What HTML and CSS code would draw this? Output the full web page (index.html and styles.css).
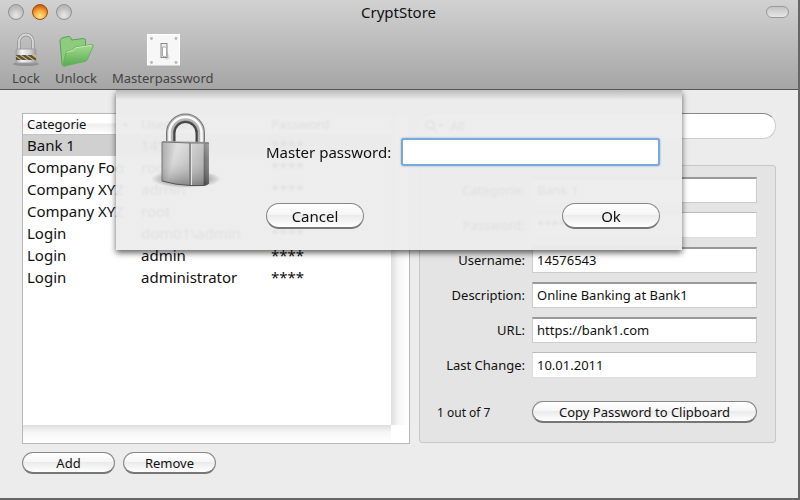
FILE: index.html
```html
<!DOCTYPE html>
<html lang="en">
<head>
  <meta charset="UTF-8">
  <meta name="viewport" content="width=device-width, initial-scale=1.0">
  <title>CryptStore</title>
  <link rel="stylesheet" href="styles.css">
</head>
<body>

<div class="window">
  <header class="header">
    <div class="titlebar">
      <div class="lights">
        <button class="light" aria-label="Close"></button>
        <button class="light light-orange" aria-label="Minimize"></button>
        <button class="light" aria-label="Zoom"></button>
      </div>
      <h1>CryptStore</h1>
      <button class="pill" aria-label="Toggle toolbar"></button>
    </div>

    <nav class="toolbar">
      <button class="tool">
        <svg width="28" height="36" viewBox="0 0 28 36">
          <defs>
            <linearGradient id="smallMetal" x1="0" x2="1">
              <stop offset="0" stop-color="#aaa"/>
              <stop offset=".3" stop-color="#f4f4f4"/>
              <stop offset=".7" stop-color="#d4d4d4"/>
              <stop offset="1" stop-color="#999"/>
            </linearGradient>
            <clipPath id="band"><rect x="4" y="23" width="20" height="5"/></clipPath>
          </defs>
          <ellipse cx="14" cy="32" rx="13" ry="2" fill="#000" opacity=".18"/>
          <path d="M7 18V10a7 7.500 0 0 1 14 0v8" fill="none" stroke="#909090" stroke-width="3.400"/>
          <path d="M7 18V10a7 7.500 0 0 1 14 0v8" fill="none" stroke="#d8d8d8" stroke-width="1.800"/>
          <rect x="4" y="17" width="20" height="14" rx="1" fill="url(#smallMetal)" stroke="#a0a0a0"/>
          <rect x="4" y="23" width="20" height="5" fill="#dcbc5c"/>
          <g clip-path="url(#band)" stroke="#55524a" stroke-width="2.400">
            <path d="M-2 22l10 7M4 22l10 7M10 22l10 7M16 22l10 7"/>
          </g>
        </svg>
        Lock
      </button>
      <button class="tool">
        <svg width="36" height="36" viewBox="0 0 36 36">
          <defs>
            <linearGradient id="folder" x1="0" y1="0" x2="0" y2="1">
              <stop offset="0" stop-color="#a5dc92"/>
              <stop offset="1" stop-color="#58aa50"/>
            </linearGradient>
          </defs>
          <path d="M2 9q0-2 2-3l6-1.500q2-.5 2.500 1l1 2.500 12-1.500q2 0 2 2V28L6 34q-1.500 0-2-2z" fill="#8ccc7e" stroke="#5ba153"/>
          <path d="M4.500 33.500L8 21q.5-2 2.500-2.300l4-.7 2.500-3 17-2.500q1.500 0 1 2L29.500 27q-.5 2-2 2.300L6.500 34z" fill="url(#folder)" stroke="#69b060"/>
          <path d="M9 21q.5-1.500 2-1.700l4-.6 2.500-3 16-2.300" fill="none" stroke="#c2ecb4"/>
        </svg>
        Unlock
      </button>
      <button class="tool">
        <svg width="36" height="36" viewBox="0 0 36 36">
          <rect x="2.500" y="2.500" width="32" height="31" fill="#f7f7f7" stroke="#fff"/>
          <path d="M2 34h33" stroke="#aaa"/>
          <g fill="#b5b5b5">
            <circle cx="6.500" cy="6.500" r="1.400"/><circle cx="31" cy="6.500" r="1.400"/>
            <circle cx="6.500" cy="30.500" r="1.400"/><circle cx="31" cy="30.500" r="1.400"/>
          </g>
          <path d="M22 19l3 7-3 2-3-2z" fill="#ddd"/>
          <rect x="16" y="11.500" width="6" height="14" fill="#eee" stroke="#888"/>
          <path d="M17.500 15h4v9q-2 1.500-4 0z" fill="#fff" stroke="#aaa"/>
        </svg>
        Masterpassword
      </button>
    </nav>
  </header>

  <main class="content">
    <section class="left">
      <div class="list">
        <table>
          <colgroup><col class="col-cat"><col class="col-user"><col></colgroup>
          <thead>
            <tr><th>Categorie <span class="sort">▲</span></th><th>Username</th><th>Password</th></tr>
          </thead>
          <tbody>
            <tr class="selected"><td>Bank 1</td><td>14576543</td><td>****</td></tr>
            <tr><td>Company Foo</td><td>root</td><td>****</td></tr>
            <tr><td>Company XYZ</td><td>admin</td><td>****</td></tr>
            <tr><td>Company XYZ</td><td>root</td><td>****</td></tr>
            <tr><td>Login</td><td>dom01\admin</td><td>****</td></tr>
            <tr><td>Login</td><td>admin</td><td>****</td></tr>
            <tr><td>Login</td><td>administrator</td><td>****</td></tr>
          </tbody>
        </table>
        <div class="vbar"></div>
        <div class="hbar"></div>
      </div>
      <div class="actions">
        <button class="btn">Add</button>
        <button class="btn">Remove</button>
      </div>
    </section>

    <section class="right">
      <div class="search">
        <svg width="22" height="16" viewBox="0 0 22 16" fill="none" stroke="#555" stroke-width="2">
          <circle cx="6" cy="7" r="4"/><path d="M9 10l4 4"/><path d="M14 6h6l-3 4z" fill="#555" stroke="none"/>
        </svg>
        <input type="text" aria-label="Search" value="All">
      </div>

      <form class="details">
        <label for="category">Categorie:</label>
        <input type="text" id="category" value="Bank 1">
        <label for="password">Password:</label>
        <input type="text" id="password" class="plain" value="****">
        <label for="username">Username:</label>
        <input type="text" id="username" value="14576543">
        <label for="description">Description:</label>
        <input type="text" id="description" value="Online Banking at Bank1">
        <label for="url">URL:</label>
        <input type="text" id="url" value="https://bank1.com">
        <label for="lastChange">Last Change:</label>
        <input type="text" id="lastChange" class="plain" value="10.01.2011">
        <span class="count">1 out of 7</span>
        <button type="button" class="btn copy">Copy Password to Clipboard</button>
      </form>
    </section>

    <dialog class="sheet" open>
      <svg class="padlock" width="76" height="80" viewBox="0 0 76 80">
        <defs>
          <linearGradient id="front" x1="0" y1="0" x2="1" y2=".4">
            <stop offset="0" stop-color="#8c8c8c"/>
            <stop offset=".5" stop-color="#d6d6d6"/>
            <stop offset="1" stop-color="#c0c0c0"/>
          </linearGradient>
          <linearGradient id="side" x1="0" y1="0" x2="1" y2="0">
            <stop offset="0" stop-color="#c4c4c4"/>
            <stop offset=".68" stop-color="#b0b0b0"/>
            <stop offset=".76" stop-color="#626262"/>
            <stop offset="1" stop-color="#808080"/>
          </linearGradient>
          <linearGradient id="fade" x1="0" y1="0" x2="0" y2="1">
            <stop offset="0" stop-color="#fff" stop-opacity=".3"/>
            <stop offset=".4" stop-color="#fff" stop-opacity=".1"/>
            <stop offset="1" stop-color="#000" stop-opacity=".3"/>
          </linearGradient>
          <radialGradient id="shade">
            <stop offset="0" stop-color="#000" stop-opacity=".7"/>
            <stop offset="1" stop-color="#000" stop-opacity="0"/>
          </radialGradient>
        </defs>
        <ellipse cx="34" cy="67" rx="35" ry="9" fill="url(#shade)"/>
        <path d="M18 34V21a15.500 15.500 0 0 1 31 0v14" fill="none" stroke="#777" stroke-width="8"/>
        <path d="M18 34V21a15.500 15.500 0 0 1 31 0v14" fill="none" stroke="#b4b4b4" stroke-width="6"/>
        <path d="M17.500 34V21a16 16 0 0 1 32 0v14" fill="none" stroke="#fafafa" stroke-width="2.500"/>
        <path d="M22.500 30V21a11 11 0 0 1 22 0v9" fill="none" stroke="#444" stroke-width="2"/>
        <path d="M10 30q0-1 2-1l44 1 1 1-19 1z" fill="#aaa"/>
        <path d="M10 30l28 1v42q-14 0-28-4z" fill="url(#front)"/>
        <path d="M38 31h19v40q-2 2-5 2.500H38z" fill="url(#side)"/>
        <path d="M10 30l28 1h19v40q-2 2-5 2.500H38q-14-.5-28-4.500z" fill="url(#fade)"/>
        <path d="M38 31v42" stroke="#777" stroke-width="1.500"/>
        <path d="M39.500 31v42" stroke="#e4e4e4" stroke-width="1"/>
        <path d="M10 69V30l28 1h19" stroke="#777" fill="none"/>
        <path d="M10 69q14 4 28 4.500h14q3-.5 5-2.500" stroke="#555" fill="none"/>
      </svg>
      <form class="sheet-form">
        <div class="field">
          <label for="master">Master password:</label>
          <input type="password" id="master">
        </div>
        <div class="sheet-buttons">
          <button type="button" class="btn btn-large">Cancel</button>
          <button type="button" class="btn btn-large">Ok</button>
        </div>
      </form>
    </dialog>
  </main>
</div>

</body>
</html>
```

FILE: styles.css
```css
* {
  box-sizing: border-box;
}

body {
  margin: 0;
  background-color: #666;
  font-family: "Noto Sans", "Open Sans", sans-serif;
  font-size: 13px;
  color: #111;
}

button, input {
  font: inherit;
  color: inherit;
}

.window {
  display: flex;
  flex-direction: column;
  min-height: calc(100vh - 2px);
  margin-right: 2px;
  background-color: #ececec;
}

.header {
  height: 90px;
  background: linear-gradient(#d2d2d2, #a5a5a5);
  border-bottom: 1px solid #555;
}

.titlebar {
  display: grid;
  grid-template-columns: 1fr auto 1fr;
  align-items: center;
  height: 24px;
  padding: 0 9px 0 8px;
}

h1 {
  margin: 0;
  font-size: 15px;
  font-weight: normal;
}

.lights {
  display: flex;
  gap: 8px;
}

.light {
  width: 16px;
  height: 16px;
  padding: 0;
  border: 1px solid #909090;
  border-radius: 50%;
  background: radial-gradient(circle at 50% 75%, #e8e8e8, #b8b8b8 70%);
}

.light-orange {
  border-color: #a04a10;
  background: radial-gradient(circle at 50% 80%, #ffe98a, #f5a83a 45%, #cf5f16 80%);
}

.pill {
  justify-self: end;
  width: 23px;
  height: 12px;
  padding: 0;
  border: 1px solid #999;
  border-radius: 6px;
  background: linear-gradient(#c4c4c4, #e6e6e6);
}

.toolbar {
  display: flex;
  gap: 15px;
  padding: 8px 12px 0;
}

.tool {
  display: flex;
  flex-direction: column;
  align-items: center;
  padding: 0;
  border: none;
  background: none;
  color: #444;
  line-height: 20px;
}

.content {
  position: relative;
  flex: 1;
  display: grid;
  grid-template-columns: 388fr 357fr;
  gap: 9px;
  align-items: start;
  padding: 23px 22px;
}

.list {
  display: grid;
  grid-template-columns: 1fr 18px;
  grid-template-rows: 1fr 18px;
  align-items: start;
  height: 331px;
  border: 1px solid #b8b8b8;
  background-color: #fff;
}

table {
  width: 100%;
  table-layout: fixed;
  border-collapse: collapse;
}

.col-cat {
  width: 114px;
}

.col-user {
  width: 130px;
}

th, td {
  padding: 0 0 0 4px;
  text-align: left;
  white-space: nowrap;
  overflow: hidden;
}

th {
  height: 20px;
  font-size: 13px;
  font-weight: normal;
  line-height: 18px;
  background: linear-gradient(#fff 45%, #eee 50%, #fff);
  border-bottom: 1px solid #c4c4c4;
}

.sort {
  float: right;
  padding-right: 8px;
  font-size: 7px;
}

td {
  height: 22px;
  font-size: 15px;
  line-height: 20px;
}

.selected {
  background-color: #d0d0d0;
}

.vbar {
  align-self: stretch;
  background: linear-gradient(to right, #ddd, #f6f6f6 40%, #fff);
}

.hbar {
  align-self: stretch;
  background: linear-gradient(#ddd, #f6f6f6 40%, #fff);
}

.btn {
  min-width: 93px;
  height: 22px;
  padding: 0 10px;
  border: 1px solid #888;
  border-bottom: 2px solid #777;
  border-radius: 11px;
  background: linear-gradient(#fff, #f6f6f6 45%, #ebebeb 50%, #fff);
  line-height: 18px;
}

.actions {
  display: flex;
  gap: 8px;
  padding-top: 8px;
}

.search {
  display: flex;
  align-items: center;
  gap: 4px;
  height: 26px;
  padding: 0 4px;
  border: 1px solid #ccc;
  border-top-color: #888;
  border-radius: 13px;
  background-color: #fff;
}

.search input {
  flex: 1;
  padding: 0;
  border: none;
  outline: none;
  background: none;
}

.details {
  display: grid;
  grid-template-columns: 105px 1fr;
  gap: 9px 7px;
  align-items: center;
  margin-top: 26px;
  padding: 11px 18px 19px 0;
  border: 1px solid #c8c8c8;
  border-radius: 3px;
  background-color: #e4e4e4;
}

.details label {
  text-align: right;
}

.details input {
  width: 100%;
  height: 26px;
  padding: 0 4px 1px;
  border: 1px solid #ccc;
  border-top: 2px solid #999;
  background-color: #fff;
}

.details .plain {
  border: 1px solid #ddd;
  border-top-color: #bbb;
}

.count {
  padding-left: 17px;
  font-size: 12px;
}

.count, .copy {
  margin-top: 14px;
}

.sheet {
  position: absolute;
  top: 0;
  left: 50%;
  display: flex;
  align-items: flex-start;
  gap: 38px;
  width: 566px;
  height: 160px;
  margin: 0;
  padding: 22px 22px 22px 36px;
  border: none;
  transform: translateX(-50%);
  color: #111;
  background: linear-gradient(rgba(185, 185, 185, 0.95), rgba(236, 236, 236, 0.94) 10px);
  box-shadow: 0 3px 6px rgba(0, 0, 0, 0.6);
  clip-path: inset(0 -10px -14px -10px);
  backdrop-filter: blur(1px);
}

.padlock {
  flex: none;
}

.sheet-form {
  flex: 1;
  padding-top: 26px;
  font-size: 15px;
}

.field {
  display: flex;
  align-items: center;
  gap: 10px;
}

.field label {
  white-space: nowrap;
}

.field input {
  flex: 1;
  min-width: 0;
  height: 28px;
  border: 2px solid #78a8de;
  border-radius: 3px;
  outline: none;
  background-color: #fff;
  box-shadow: 0 0 2px #78a8de;
}

.sheet-buttons {
  display: flex;
  justify-content: space-between;
  padding-top: 37px;
}

.btn-large {
  width: 98px;
  height: 26px;
  border-radius: 13px;
}
```
